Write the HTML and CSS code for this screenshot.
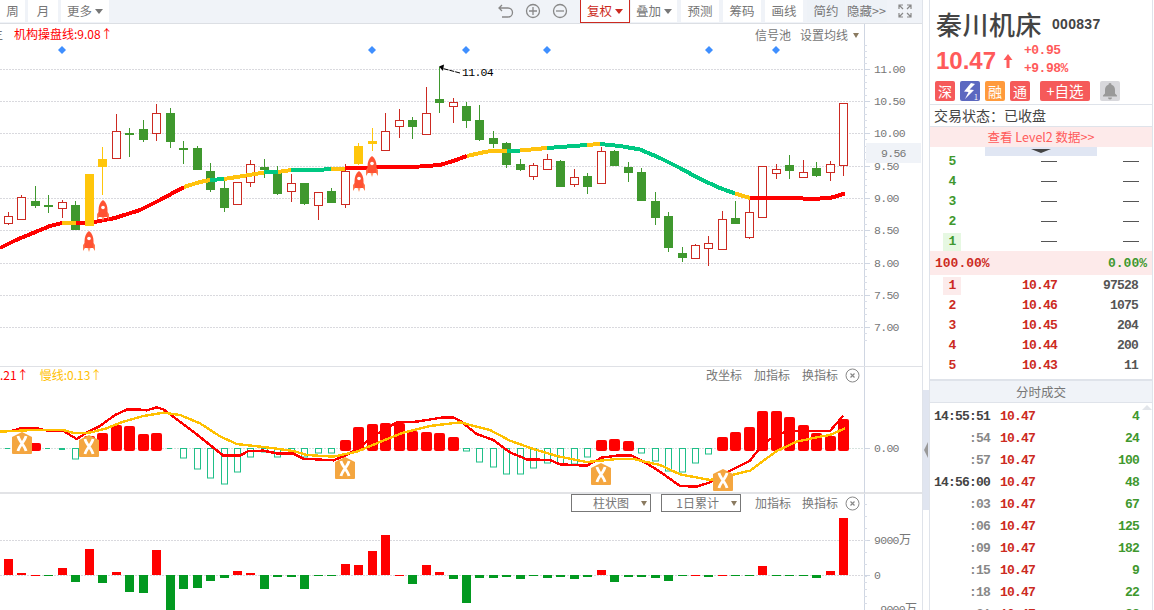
FILE: index.html
```html
<!DOCTYPE html>
<html lang="zh">
<head>
<meta charset="utf-8">
<title>秦川机床 000837</title>
<link rel="stylesheet" href="styles.css">
</head>
<body>
<div class="app">
  <main class="left">
    <nav class="toolbar">
      <div class="tool-group">
        <span class="btn btn-week">周</span>
        <span class="btn btn-month">月</span>
        <span class="btn btn-more">更多<i class="caret"></i></span>
      </div>
      <div class="tool-group tool-right">
        <svg class="ticon" width="18" height="18" viewBox="0 0 18 18"><path d="M5 3 2 6l3 3M2.500 6H11a4.500 4.500 0 0 1 0 9H5" fill="none" stroke="#888" stroke-width="1.300"/></svg>
        <svg class="ticon ticon-plus" width="16" height="16" viewBox="0 0 16 16"><circle cx="8" cy="8" r="6.500" fill="none" stroke="#888" stroke-width="1.300"/><path d="M4 8h8M8 4v8" stroke="#888" stroke-width="1.300"/></svg>
        <svg class="ticon ticon-minus" width="16" height="16" viewBox="0 0 16 16"><circle cx="8" cy="8" r="6.500" fill="none" stroke="#888" stroke-width="1.300"/><path d="M4 8h8" stroke="#888" stroke-width="1.300"/></svg>
        <span class="btn btn-active">复权<i class="caret caret-red"></i></span>
        <span class="btn btn-overlay">叠加<i class="caret"></i></span>
        <span class="btn btn-plain">预测</span>
        <span class="btn btn-plain">筹码</span>
        <span class="btn btn-plain">画线</span>
        <span class="btn btn-simple">简约</span>
        <span class="btn btn-hide">隐藏&gt;&gt;</span>
        <svg class="ticon ticon-full" width="14" height="14" viewBox="0 0 14 14"><path d="M1 5V1h4M9 1h4v4M13 9v4H9M5 13H1V9M1 1l4 4M13 1 9 5M13 13 9 9M1 13l4-4" fill="none" stroke="#888" stroke-width="1.200"/></svg>
      </div>
    </nav>

    <section class="panel panel-main">
      <svg id="mainChart" class="chart" width="923" height="342" viewBox="0 24 923 342"></svg>
      <div class="overlay-left main-legend"><span class="clip">主</span><span class="legend-red">机构操盘线:9.08↑</span></div>
      <div class="overlay-right main-links"><span>信号池</span><span>设置均线</span><i class="caret caret-mix caret-near"></i></div>
    </section>

    <section class="panel panel-macd">
      <svg id="macdChart" class="chart" width="923" height="126" viewBox="0 367 923 126"></svg>
      <div class="overlay-left macd-legend"><span class="legend-red">.21↑</span><span class="legend-yellow">慢线:0.13↑</span></div>
      <div class="overlay-right indicator-links"><span>改坐标</span><span>加指标</span><span>换指标</span>
        <svg class="close" width="15" height="15" viewBox="0 0 15 15"><circle cx="7.500" cy="7.500" r="6.500" fill="none" stroke="#888"/><path d="m5.500 5.500 4 4m0-4-4 4" stroke="#888" stroke-width="1.200"/></svg>
      </div>
    </section>

    <section class="panel panel-vol">
      <svg id="volChart" class="chart" width="923" height="116" viewBox="0 494 923 116"></svg>
      <div class="overlay-right vol-links">
        <span class="select select-a">柱状图<i class="caret caret-mix"></i></span>
        <span class="select select-b">1日累计<i class="caret caret-mix"></i></span>
        <span class="link-add">加指标</span><span>换指标</span>
        <svg class="close" width="15" height="15" viewBox="0 0 15 15"><circle cx="7.500" cy="7.500" r="6.500" fill="none" stroke="#888"/><path d="m5.500 5.500 4 4m0-4-4 4" stroke="#888" stroke-width="1.200"/></svg>
      </div>
    </section>
  </main>

  <div class="handle-col"><div class="handle"><i class="handle-arrow"></i></div></div>

  <aside class="side">
    <header class="quote">
      <div class="name-row"><span class="name">秦川机床</span><span class="code">000837</span></div>
      <div class="price-row">
        <span class="price">10.47</span>
        <svg class="price-arrow" width="10" height="14" viewBox="0 0 10 14"><path d="M5 0l4.500 6H6.500v8h-3V6H.5z" fill="#ff5a5a"/></svg>
        <div class="change"><span>+0.95</span><span>+9.98%</span></div>
      </div>
      <div class="tags">
        <span class="tag tag-red">深</span>
        <span class="tag tag-blue"><svg width="20" height="20" viewBox="0 0 20 20"><path d="M11 2 4 10.500l4.500.5L5 18l9-9-4.500-.5L15 3z" fill="#fff"/></svg><b class="tag-sub">1</b></span>
        <span class="tag tag-orange">融</span>
        <span class="tag tag-red">通</span>
        <span class="tag-add">+自选</span>
        <span class="tag tag-bell"><svg width="16" height="18" viewBox="0 0 16 18"><path d="M8 1a1.500 1.500 0 0 1 1.500 1.700C12 3.500 13 5.500 13 8v3.500l2 2v1H1v-1l2-2V8c0-2.500 1-4.500 3.500-5.300A1.500 1.500 0 0 1 8 1zM6 15.500h4a2 2 0 0 1-4 0z" fill="#999"/></svg></span>
      </div>
    </header>
    <div class="status">交易状态：已收盘</div>
    <div class="level2">查看 Level2 数据&gt;&gt;</div>
    <div class="tab-row"><span class="tab-pull"><i class="tab-arrow"></i></span></div>

    <div class="book book-ask">
      <div class="book-row"><span class="lvl">5</span><span class="dash"></span><span class="dash"></span></div>
      <div class="book-row"><span class="lvl">4</span><span class="dash"></span><span class="dash"></span></div>
      <div class="book-row"><span class="lvl">3</span><span class="dash"></span><span class="dash"></span></div>
      <div class="book-row"><span class="lvl">2</span><span class="dash"></span><span class="dash"></span></div>
      <div class="book-row"><span class="lvl lvl-on">1</span><span class="dash"></span><span class="dash"></span></div>
    </div>
    <div class="ratio"><span class="ratio-up">100.00%</span><span class="ratio-down">0.00%</span></div>
    <div class="book book-bid">
      <div class="book-row"><span class="lvl lvl-on">1</span><span class="bp">10.47</span><span class="bv">97528</span></div>
      <div class="book-row"><span class="lvl">2</span><span class="bp">10.46</span><span class="bv">1075</span></div>
      <div class="book-row"><span class="lvl">3</span><span class="bp">10.45</span><span class="bv">204</span></div>
      <div class="book-row"><span class="lvl">4</span><span class="bp">10.44</span><span class="bv">200</span></div>
      <div class="book-row"><span class="lvl">5</span><span class="bp">10.43</span><span class="bv">11</span></div>
    </div>
    <div class="ticks-head">分时成交</div>
    <div class="ticks">
      <i class="scroll-up"></i>
      <div class="tick"><span class="t t-full">14:55:51</span><span class="tp">10.47</span><span class="tv">4</span></div>
      <div class="tick"><span class="t">:54</span><span class="tp">10.47</span><span class="tv">24</span></div>
      <div class="tick"><span class="t">:57</span><span class="tp">10.47</span><span class="tv">100</span></div>
      <div class="tick"><span class="t t-full">14:56:00</span><span class="tp">10.47</span><span class="tv">48</span></div>
      <div class="tick"><span class="t">:03</span><span class="tp">10.47</span><span class="tv">67</span></div>
      <div class="tick"><span class="t">:06</span><span class="tp">10.47</span><span class="tv">125</span></div>
      <div class="tick"><span class="t">:09</span><span class="tp">10.47</span><span class="tv">182</span></div>
      <div class="tick"><span class="t">:15</span><span class="tp">10.47</span><span class="tv">9</span></div>
      <div class="tick"><span class="t">:18</span><span class="tp">10.47</span><span class="tv">22</span></div>
      <div class="tick"><span class="t">:21</span><span class="tp">10.47</span><span class="tv">33</span></div>
    </div>
  </aside>
</div>
<script src="chart.js"></script>
</body>
</html>
```
FILE: styles.css
```css
* { box-sizing: border-box; }
html, body { margin: 0; padding: 0; height: 100%; overflow: hidden; background: #fff; }
body { font-family: "Noto Sans CJK SC", "Liberation Sans", sans-serif; font-size: 12px; color: #777; }
i { font-style: normal; display: block; }
.app { display: flex; width: 1154px; height: 610px; overflow: hidden; }

.left { width: 923px; flex: none; display: flex; flex-direction: column; border-right: 1px solid #dfe3ea; }
.toolbar { height: 24px; flex: none; display: flex; justify-content: space-between; background: #f0f3f8; border-bottom: 1px solid #dcdfe4; padding-bottom: 1px; }
.tool-group { display: flex; align-items: stretch; }
.tool-right { align-items: stretch; padding-right: 10px; }
.btn { display: flex; align-items: center; justify-content: center; background: #fff; font-size: 12.500px; color: #777; line-height: 1; }
.btn-week { width: 25px; margin-right: 3px; }
.btn-month { width: 30px; margin-right: 3px; }
.btn-more { width: 48px; gap: 3px; }
.caret { width: 0; height: 0; border-left: 4px solid transparent; border-right: 4px solid transparent; border-top: 5px solid #777; }
.caret-red { border-top-color: #cc2a20; }
.caret-mix { border-left-width: 3.500px; border-right-width: 3.500px; border-top: 5px solid #8a7a60; }
.caret-near { margin-left: -4px; }
.ticon { align-self: center; flex: none; }
.ticon-plus { margin-left: 10px; }
.ticon-minus { margin-left: 11px; margin-right: 12px; }
.ticon-full { margin-left: 11px; }
.btn-active { width: 50px; gap: 3px; border: 1px solid #cc2a20; border-top: 0; color: #cc2a20; margin-right: 1px; margin-bottom: -1px; }
.btn-overlay { width: 46px; gap: 3px; margin-right: 4px; }
.btn-plain { width: 38px; margin-right: 4px; }
.btn-simple { width: 38px; margin-right: 1px; background: #eef2f7; }
.btn-hide { width: 41px; background: #eef2f7; white-space: nowrap; }

.panel { position: relative; flex: none; }
.panel-main { height: 343px; border-bottom: 1px solid #dfe1e6; }
.panel-macd { height: 127px; border-bottom: 2px solid #e2e3e6; }
.panel-vol { height: 116px; }
.chart { display: block; }
.chart text { font-family: "Liberation Mono", monospace; font-size: 11.500px; letter-spacing: -0.700px; fill: #777; }
.chart .mark-label { fill: #000; font-size: 11.500px; }
.chart .axis-cn { font-family: "Noto Sans CJK SC", sans-serif; font-size: 12px; letter-spacing: 0; }

.overlay-left { position: absolute; left: 0; top: 2px; display: flex; line-height: 16px; font-size: 12px; }
.overlay-right { position: absolute; top: 2px; right: 62px; display: flex; align-items: center; line-height: 16px; font-size: 12px; color: #777; }
.clip { width: 14px; overflow: hidden; text-indent: -9px; color: #777; }
.legend-red { color: #f00; }
.legend-yellow { color: #ffc000; margin-left: 11px; }
.main-links { gap: 9px; right: 63px; top: 3px; }
.macd-legend { top: 0; }
.indicator-links { gap: 12px; top: 0; }
.indicator-links .close { margin-left: -5px; }
.vol-links { top: 0; gap: 11px; }
.vol-links .close { margin-left: -4px; }
.select { width: 80px; height: 18px; border: 1px solid #777; display: flex; align-items: center; justify-content: flex-end; gap: 12px; padding-right: 3px; }
.select-a { margin-right: -1px; }
.link-add { margin-left: 3px; }

.handle-col { width: 6px; flex: none; background: #fff; padding-top: 390px; }
.handle { width: 6px; height: 120px; background: #e0e5f0; display: flex; align-items: center; padding-left: 1px; }
.handle-arrow { border-top: 8px solid transparent; border-bottom: 8px solid transparent; border-right: 4px solid #999; }

.side { width: 224px; flex: none; border-left: 1px solid #dfe3ea; border-right: 1px solid #dfe3ea; display: flex; flex-direction: column; color: #444; height: 610px; overflow: hidden; }
.quote { height: 104px; padding: 7px 0 0 6px; flex: none; }
.name-row { display: flex; align-items: center; height: 33px; }
.name { font-size: 26px; line-height: 33px; font-weight: 500; color: #444; letter-spacing: 0.500px; }
.code { font-family: "Liberation Sans", sans-serif; font-weight: 700; font-size: 14px; margin-left: 10px; color: #444; letter-spacing: 0.300px; }
.price-row { display: flex; align-items: center; height: 36px; margin-top: 3px; color: #ff5a5a; }
.price { font-family: "Liberation Sans", sans-serif; font-size: 24px; font-weight: 700; width: 67px; }
.price-arrow { flex: none; }
.change { display: flex; flex-direction: column; margin-left: 11px; margin-top: -2px; font-family: "Liberation Mono", monospace; font-size: 13px; font-weight: 700; line-height: 18px; letter-spacing: -0.500px; }
.tags { display: flex; align-items: center; margin: 2px 0 0 -1px; }
.tag { width: 20px; height: 20px; border-radius: 2px; margin-right: 5px; color: #fff; font-size: 14px; display: flex; align-items: center; justify-content: center; line-height: 1; position: relative; }
.tag-red { background: #f55a5a; }
.tag-blue { background: #5c68c0; }
.tag-sub { position: absolute; right: 2px; bottom: 0; font-size: 7px; font-weight: 400; }
.tag-orange { background: #ff9a3c; }
.tag-add { width: 50px; height: 20px; margin: 0 10px 0 5px; border-radius: 2px; background: #f55a5a; color: #fff; font-size: 14.500px; line-height: 20px; text-align: center; }
.tag-bell { background: #d8d8dc; margin: 0; }
.status { height: 23px; flex: none; border-top: 1px solid #dfe3ea; border-bottom: 1px solid #dfe3ea; padding-left: 4px; font-size: 14px; line-height: 21px; color: #444; }
.level2 { height: 20px; flex: none; background: #fdeaea; color: #ff5a5a; font-size: 12.500px; line-height: 20px; text-align: center; }
.tab-row { height: 0; position: relative; flex: none; }
.tab-pull { position: absolute; left: 55px; top: 0; width: 112px; height: 9px; background: #e0e6f3; display: flex; justify-content: center; }
.tab-arrow { border-left: 10px solid transparent; border-right: 10px solid transparent; border-top: 4px solid #444; margin-top: 2px; }

.book { flex: none; font-family: "Liberation Mono", monospace; font-weight: 700; font-size: 13px; letter-spacing: -0.800px; }
.book-ask { padding-top: 4px; height: 104px; color: #3f982e; }
.book-bid { padding-top: 0; height: 104px; color: #cc2a22; }
.book-row { display: flex; height: 20px; align-items: center; padding-top: 1px; }
.lvl { width: 18px; height: 18px; margin-left: 13px; text-align: center; line-height: 18px; }
.book-ask .lvl-on { background: #e6f8e2; }
.book-bid .lvl-on { background: #fcebeb; }
.dash { width: 16px; height: 1px; background: #555; }
.lvl + .dash { margin-left: 80px; }
.dash + .dash { margin-left: 66px; }
.bp { width: 96px; text-align: right; }
.bv { width: 81px; text-align: right; color: #555; }
.ratio { height: 24px; flex: none; background: #fdeaea; display: flex; justify-content: space-between; align-items: center; padding: 0 5px; font-family: "Liberation Mono", monospace; font-weight: 700; font-size: 13px; letter-spacing: 0; }
.ratio-up { color: #cc2a22; }
.ratio-down { color: #3f982e; }
.ticks-head { height: 24px; flex: none; border-top: 2px solid #dfe3ea; border-bottom: 1px solid #dfe3ea; background: #f0f3f8; color: #777; font-size: 12.500px; line-height: 21px; text-align: center; }
.ticks { position: relative; flex: 1; padding-top: 2px; font-family: "Liberation Mono", monospace; font-weight: 700; font-size: 13px; letter-spacing: -0.800px; }
.scroll-up { position: absolute; right: 0; top: 2px; border-left: 5px solid transparent; border-right: 5px solid transparent; border-bottom: 5px solid #e2e5ea; }
.tick { display: flex; height: 22px; align-items: center; }
.t { width: 60px; text-align: right; color: #888; }
.t-full { color: #444; }
.tp { width: 34px; margin-left: 10px; color: #cc2a22; }
.tv { width: 105px; text-align: right; color: #3f982e; }
```
FILE: chart.js
```js
var NS = 'http://www.w3.org/2000/svg';
function el(parent, name, attrs, text) {
  var n = document.createElementNS(NS, name);
  for (var k in attrs) n.setAttribute(k, attrs[k]);
  if (text !== undefined) n.textContent = text;
  parent.appendChild(n);
  return n;
}
function cx(i) { return Math.round(8 + 13.47 * i); }
var AXIS = 864, GREEN = '#3f982e', RED = '#cc2a22', YELLOW = '#ffc60b';

function axis(svg, y0, y1) {
  el(svg, 'rect', { x: AXIS, y: y0, width: 1, height: y1 - y0, fill: '#cfd6e2' });
}
function grid(svg, y) {
  el(svg, 'line', { x1: 0, x2: AXIS, y1: y + 0.5, y2: y + 0.5, stroke: '#d9d9de', 'stroke-dasharray': '2 1', 'shape-rendering': 'crispEdges' });
  el(svg, 'rect', { x: AXIS, y: y, width: 6, height: 1, fill: '#cfd6e2', 'shape-rendering': 'crispEdges' });
}
function minor(svg, y) {
  el(svg, 'rect', { x: AXIS, y: y, width: 3, height: 1, fill: '#d9dee8' });
}
function poly(svg, pts, color, w) {
  el(svg, 'polyline', { points: pts.map(function (p) { return p[0] + ',' + p[1]; }).join(' '), fill: 'none', stroke: color, 'stroke-width': w, 'stroke-linejoin': 'round', 'shape-rendering': 'crispEdges' });
}

/* ---------- main ---------- */
var main = document.getElementById('mainChart');
var levels = [[69, '11.00'], [101, '10.50'], [133, '10.00'], [166, '9.50'], [198, '9.00'], [230, '8.50'], [263, '8.00'], [295, '7.50'], [327, '7.00']];
axis(main, 24, 366);
levels.forEach(function (l, n) {
  grid(main, l[0]);
  var count = n === levels.length - 1 ? 3 : 5;
  for (var k = 1; k < count; k++) minor(main, Math.round(l[0] + k * 6.45));
  el(main, 'text', { x: 874, y: l[0] + 4 }, l[1]);
});
for (var k = 1; k < 5; k++) minor(main, 69 - k * 6);

var candles = [
  ['r',216,223,212,225],['r',197,219,195,220],['g',201,206,186,208],['g',205,206,195,213],['r',202,208,200,218],
  ['g',205,230,201,230],['y',174,226,174,226],['y',159,167,147,195],['r',131,158,114,158],['g',133,135,128,157],
  ['g',129,140,120,142],['r',113,133,104,141],['g',113,142,108,148],['g',148,150,141,164],['g',148,170,146,170],
  ['g',171,190,163,192],['g',188,208,181,212],['r',182,204,182,205],['r',164,182,160,187],['g',167,170,159,178],
  ['g',173,194,166,195],['r',183,191,174,202],['g',183,204,183,205],['r',192,205,192,220],['g',191,203,188,203],
  ['r',171,204,164,208],['y',146,164,143,165],['y',141,144,128,151],['r',131,150,113,150],['r',120,126,109,138],
  ['g',120,127,117,139],['r',113,134,87,134],['g',99,103,67,113],['r',102,106,98,123],['g',106,121,102,128],
  ['g',120,140,105,141],['g',138,144,131,148],['g',143,165,142,168],['g',164,170,159,171],['r',165,176,163,180],
  ['r',159,169,154,170],['g',161,187,160,187],['r',177,184,169,187],['g',176,187,173,194],['r',151,183,147,184],
  ['g',151,166,150,166],['g',167,173,162,182],['g',172,201,168,201],['g',201,218,192,225],['g',216,248,212,252],
  ['g',253,258,247,262],['r',245,258,244,258],['r',243,248,236,266],['r',219,249,211,249],['g',218,224,201,224],
  ['r',212,237,200,239],['r',166,217,166,217],['r',169,173,164,179],['g',165,171,155,179],['r',172,177,160,178],
  ['g',168,176,162,177],['r',164,172,161,181],['r',103,165,103,176]
];
function drawCandle(layer, c, i) {
  var x = cx(i), col = c[0] === 'r' ? RED : c[0] === 'g' ? GREEN : YELLOW;
  el(layer, 'rect', { x: x, y: c[3], width: 1, height: c[4] - c[3], fill: col });
  if (c[0] === 'r') {
    el(layer, 'rect', { x: x - 3.5, y: c[1] + 0.5, width: 8, height: c[2] - c[1], fill: '#fff', stroke: col });
  } else {
    el(layer, 'rect', { x: x - 4, y: c[1], width: 9, height: Math.max(c[2] - c[1], 2), fill: col });
  }
}
var candleLayer = el(main, 'g', { 'shape-rendering': 'crispEdges' });
candles.forEach(function (c, i) { if (c[0] !== 'y') drawCandle(candleLayer, c, i); });

var M = { r: '#ff0000', y: '#ffc20e', g: '#00c882' };
var ma = [
  ['r', [[0,248],[16,240],[33,233],[50,226],[62,223]]],
  ['y', [[62,223],[76,223]]],
  ['r', [[76,223],[92,222.500],[115,218],[140,210],[160,200],[184,187]]],
  ['y', [[184,187],[200,182],[210,180]]],
  ['g', [[210,180],[224,179]]],
  ['y', [[224,179],[240,176.500],[264,172.500]]],
  ['g', [[264,172.500],[278,172]]],
  ['y', [[278,172],[291,170]]],
  ['g', [[291,170],[320,170],[331,168.500]]],
  ['y', [[331,168.500],[345,168.500]]],
  ['r', [[345,168.500],[385,167],[420,166.500],[440,165],[453,161],[467,156]]],
  ['y', [[467,156],[480,153],[493,150.500],[507,150.500]]],
  ['g', [[507,150.500],[520,150.500]]],
  ['y', [[520,150.500],[547,148]]],
  ['g', [[547,148],[567,146.500],[587,145]]],
  ['y', [[587,145],[600,144]]],
  ['g', [[600,144],[620,146],[640,149.500],[660,158],[680,168],[700,179],[720,188],[735,193.500]]],
  ['y', [[735,193.500],[750,198]]],
  ['r', [[750,198],[795,198],[810,199],[830,198],[837,196],[845,193.500]]]
];
ma.forEach(function (s) { poly(main, s[1], M[s[0]], 4); });

var yellowLayer = el(main, 'g', { 'shape-rendering': 'crispEdges' });
candles.forEach(function (c, i) { if (c[0] === 'y') drawCandle(yellowLayer, c, i); });

[62, 372, 466, 547, 709, 776].forEach(function (x) {
  el(main, 'path', { d: 'M' + x + ' 46l4 4-4 4-4-4z', fill: '#3f8fff' });
});

/* peak label */
el(main, 'path', { d: 'M460 73 441 68', stroke: '#000', 'stroke-dasharray': '5 1', fill: 'none' });
el(main, 'path', { d: 'M439 66.500 444 64.500 443 71z', fill: '#000' });
el(main, 'text', { x: 462, y: 76, 'class': 'mark-label' }, '11.04');

function rocket(x, y) {
  var g = el(main, 'g', { transform: 'translate(' + x + ' ' + y + ')' });
  el(g, 'path', { d: 'M-1.500 7 0 11 1.500 7z', fill: '#ff9a70' });
  el(g, 'path', { d: 'M-4 7-6 10-6 4-3.500 1zM4 7 6 10 6 4 3.500 1z', fill: '#ff7a50' });
  el(g, 'path', { d: 'M0-10C3-8 4.500-4 4.500 0V7h-9V0C-4.500-4-3-8 0-10z', fill: '#ff5233' });
  el(g, 'circle', { cx: 0, cy: -2.500, r: 1.800, fill: '#fff' });
}
rocket(89, 241); rocket(103, 210); rocket(359, 181); rocket(372, 166);

/* price tag */
el(main, 'rect', { x: 866, y: 143, width: 55, height: 20, fill: '#f0f3f8' });
el(main, 'text', { x: 881, y: 157 }, '9.56');

/* ---------- MACD ---------- */
var macd = document.getElementById('macdChart');
axis(macd, 367, 493);
el(macd, 'line', { x1: 0, x2: AXIS, y1: 448.500, y2: 448.500, stroke: '#d6e2de', 'stroke-dasharray': '2 1', 'shape-rendering': 'crispEdges' });
el(macd, 'rect', { x: AXIS, y: 448, width: 6, height: 1, fill: '#cfd6e2' });
el(macd, 'text', { x: 874, y: 452 }, '0.00');

var hist = [449,444,443,449,450,459,436,433,425,426,434,433,449,458,469,478,484,472,457,452,457,453,457,453,453,440,427,424,423,423,431,432,433,437,451,462,467,474,474,468,463,464,464,457,440,439,441,453,461,471,472,463,454,437,432,427,411,411,417,425,433,436,419];
var barLayer = el(macd, 'g', {});
hist.forEach(function (v, i) {
  var x = cx(i);
  if (v < 448) {
    el(barLayer, 'rect', { x: x - 5, y: v, width: 11, height: 451 - v, rx: 2, fill: '#ff0000' });
  } else if (v <= 450) {
    el(barLayer, 'rect', { x: x - 3, y: 448, width: v === 450 ? 6 : 5, height: v === 450 ? 2 : 1, fill: '#1fbf88' });
  } else {
    el(barLayer, 'rect', { x: x - 2.500, y: 448.500, width: 6, height: v - 448.500, fill: 'none', stroke: '#1fbf88' });
  }
});
function z(list, ox) { return list.map(function (p) { return [ox + p[0] / 3, 365 + p[1] / 3]; }); }
var dif = z([[35,198],[60,190],[110,190],[148,198],[190,198],[230,222],[265,200],[300,183],[345,150],[380,134],[410,133],[440,136],[470,127],[490,133],[540,170],[590,208],[640,248],[670,272],[720,272],[745,258],[790,257],[830,265],[880,266],[910,281],[1000,286],[1040,270],[1080,245],[1130,207],[1190,172],[1250,170],[1330,157],[1360,157],[1380,167]], 0)
  .concat(z([[50,207],[100,225],[150,262],[200,283],[270,285],[300,298],[380,302],[425,278],[470,272],[515,272],[560,295],[600,320],[660,363],[710,365],[750,352],[810,317],[870,287],[910,235],[960,205],[1000,198],[1110,198],[1150,152]], 460));
var dea = z([[0,200],[100,195],[190,195],[220,204],[270,203],[320,190],[370,170],[430,153],[490,143],[540,150],[600,175],[660,214],[710,237],[800,247],[880,258],[920,270],[1000,275],[1070,260],[1130,235],[1210,203],[1290,183],[1380,172]], 0)
  .concat(z([[90,195],[150,227],[220,252],[290,273],[380,291],[470,282],[520,282],[600,300],[660,328],[750,345],[870,317],[950,258],[1010,230],[1080,215],[1110,210],[1155,190]], 460));
poly(macd, dif, '#ff0000', 2.4);
poly(macd, dea, '#ffc000', 2.4);

function cross(x, y) {
  var g = el(macd, 'g', { transform: 'translate(' + x + ' ' + y + ')' });
  el(g, 'path', { d: 'M-10-6 0-11 10-6V10a1 1 0 0 1-1 1H-9a1 1 0 0 1-1-1z', fill: '#f4a640' });
  el(g, 'path', { d: 'M-4-7C-3-2 3 3 4 8M4-7C3-2-3 3-4 8', fill: 'none', stroke: '#fff', 'stroke-width': 2.800 });
}
cross(22, 443); cross(89, 446); cross(345, 468); cross(601, 474); cross(723, 480);

/* ---------- volume ---------- */
var vol = document.getElementById('volChart');
axis(vol, 494, 610);
grid(vol, 540);
grid(vol, 575);
for (var m = 0; m < 7; m++) { minor(vol, 504 + m * 12); }
for (var q = 1; q < 6; q++) { minor(vol, 575 + q * 7); }
el(vol, 'text', { x: 874, y: 544 }, '9000');
el(vol, 'text', { x: 899, y: 544, 'class': 'axis-cn' }, '万');
el(vol, 'text', { x: 874, y: 579 }, '0');
el(vol, 'text', { x: 874, y: 613 }, '-9000');
el(vol, 'text', { x: 905, y: 613, 'class': 'axis-cn' }, '万');

var V = [207,249,258,258,234,276,177,279,246,306,309,180,360,297,294,273,264,243,249,297,261,261,297,258,258,222,225,183,135,258,282,225,246,267,339,264,264,261,267,258,264,261,267,261,240,276,261,261,264,273,258,258,261,258,258,258,228,258,258,258,264,243,84];
var up = 'r r r g r g r g r g g r g g g g g r r g g g g g g r r r r r g r r g g g g g g g g g g g r g g g g g g r g r g g r g g g g r r'.split(' ');
var volLayer = el(vol, 'g', { 'shape-rendering': 'crispEdges' });
V.forEach(function (v, i) {
  var x = cx(i) - 4, base = 490 + 255 / 3, tip = 490 + v / 3;
  if (up[i] === 'r') {
    var thin = v === 258;
    el(volLayer, 'rect', { x: x, y: thin ? base : tip, width: 9, height: thin ? 1 : base - tip, fill: '#ff0000' });
  } else {
    el(volLayer, 'rect', { x: x, y: base, width: 9, height: tip - base, fill: '#029920' });
  }
});
```
